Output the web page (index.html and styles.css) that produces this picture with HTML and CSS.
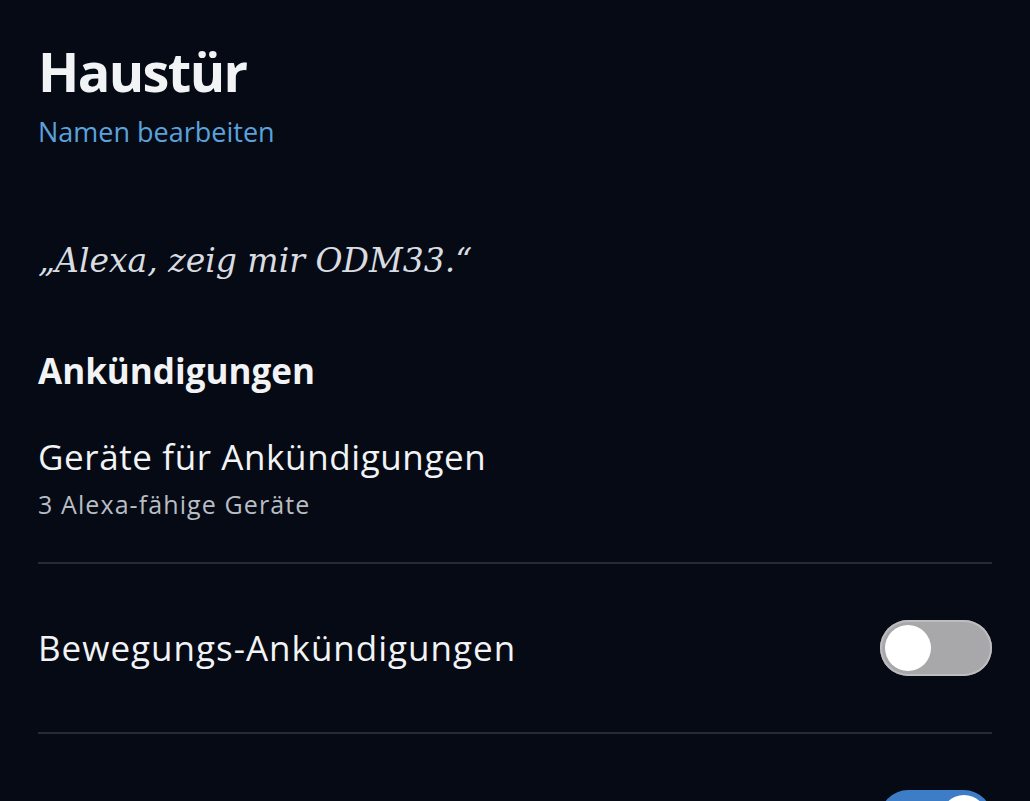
FILE: index.html
```html
<!DOCTYPE html>
<html lang="de">
<head>
  <meta charset="UTF-8">
  <meta name="viewport" content="width=device-width, initial-scale=1.0">
  <title>Haustür</title>
  <link rel="stylesheet" href="styles.css">
</head>
<body>
<div class="screen">
  <header class="device-head">
    <h1>Haustür</h1>
    <a class="edit-link" href="#">Namen bearbeiten</a>
  </header>

  <p class="utterance">„Alexa, zeig mir ODM33.“</p>

  <h2 class="section-title">Ankündigungen</h2>

  <div class="row row-nav">
    <div class="row-text">
      <div class="row-label">Geräte für Ankündigungen</div>
      <div class="row-sub">3 Alexa-fähige Geräte</div>
    </div>
  </div>

  <div class="row row-toggle">
    <div class="row-label">Bewegungs-Ankündigungen</div>
    <span class="switch"><span class="knob"></span></span>
  </div>

  <!-- next setting row starts below the fold, only its switch peeks in -->
  <div class="row row-toggle row-last">
    <div class="row-label"></div>
    <span class="switch on"><span class="knob"></span></span>
  </div>
</div>
</body>
</html>
```

FILE: styles.css
```css
html, body {
  margin: 0;
  background: #050a14;
}
body {
  font-family: "Open Sans", "Noto Sans", sans-serif;
  color: #f2f3f5;
  overflow: hidden;
  height: 801px;
}
.screen {
  padding: 0 38px;
}
.device-head {
  padding-top: 34px;
}
h1 {
  margin: 0;
  font-size: 54px;
  font-weight: 700;
  line-height: 74px;
  letter-spacing: -1.6px;
}
.edit-link {
  display: block;
  color: #5ba2dd;
  text-decoration: none;
  font-size: 27px;
  line-height: 36px;
  margin-top: 6px;
}
.utterance {
  margin: 89px 0 0;
  font-family: "DejaVu Serif", "Liberation Serif", serif;
  font-style: italic;
  font-size: 33px;
  line-height: 44px;
  color: #d9dde2;
}
.section-title {
  margin: 66px 0 0;
  font-size: 35px;
  font-weight: 700;
  line-height: 44px;
}
.row {
  display: flex;
  align-items: center;
  justify-content: space-between;
  border-bottom: 2px solid #252c36;
}
.row-nav {
  padding: 41px 0 41px;
}
.row-label {
  font-size: 35px;
  line-height: 46px;
  letter-spacing: 0.6px;
}
.row-toggle .row-label {
  letter-spacing: 1px;
}
.row-sub {
  font-size: 25px;
  line-height: 34px;
  letter-spacing: 1.1px;
  color: #b9bdc4;
  margin-top: 7px;
}
.row-toggle {
  height: 168px;
}
.row-last {
  border-bottom: none;
}
.switch {
  position: relative;
  width: 112px;
  height: 56px;
  border-radius: 28px;
  background: #a8a8ab;
  box-shadow: inset 0 0 0 2px #bdbdc0;
  flex: none;
}
.knob {
  position: absolute;
  left: 5px;
  top: 5px;
  width: 46px;
  height: 46px;
  border-radius: 50%;
  background: #fff;
}
.switch.on {
  background: #3d7dc8;
  box-shadow: none;
}
.switch.on .knob {
  left: auto;
  right: 5px;
}
```
